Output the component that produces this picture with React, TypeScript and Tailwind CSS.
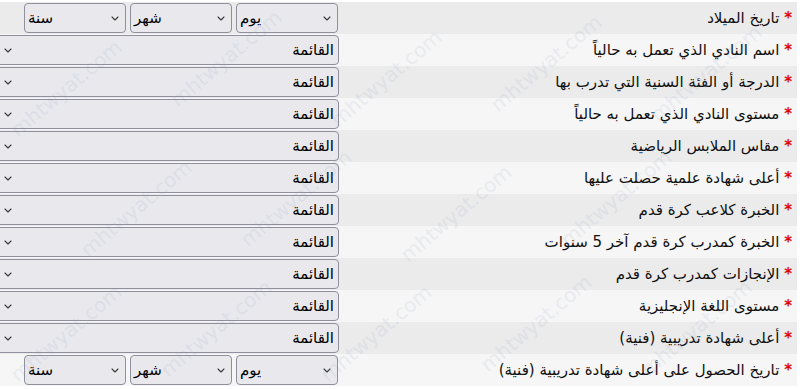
import React from "react";

const labels = [
  "تاريخ الميلاد",
  "اسم النادي الذي تعمل به حالياً",
  "الدرجة أو الفئة السنية التي تدرب بها",
  "مستوى النادي الذي تعمل به حالياً",
  "مقاس الملابس الرياضية",
  "أعلى شهادة علمية حصلت عليها",
  "الخبرة كلاعب كرة قدم",
  "الخبرة كمدرب كرة قدم آخر 5 سنوات",
  "الإنجازات كمدرب كرة قدم",
  "مستوى اللغة الإنجليزية",
  "أعلى شهادة تدريبية (فنية)",
  "تاريخ الحصول على أعلى شهادة تدريبية (فنية)",
];

function Chevron() {
  return (
    <svg width="8" height="5" viewBox="0 0 8 5" className="block">
      <path d="M1 1 L4 4 L7 1" fill="none" stroke="#3a3a3a" strokeWidth="1.1" strokeLinecap="round" strokeLinejoin="round" />
    </svg>
  );
}

function FullSelect() {
  return (
    <div className="relative w-[345px] h-[30px] ml-[-6px] rounded-[4px] border border-[#8f8f9d] bg-[#e9e9ed] flex items-center justify-between px-[4px]" dir="rtl">
      <span className="text-[15px] text-black leading-none">القائمة</span>
      <span className="pl-[5px]"><Chevron /></span>
    </div>
  );
}

function SmallSelect({ text }: { text: string }) {
  return (
    <div className="w-[102px] h-[30px] rounded-[4px] border border-[#8f8f9d] bg-[#e9e9ed] flex items-center justify-between pl-[3px] pr-[6px]" dir="ltr">
      <span className="text-[15px] text-black leading-none">{text}</span>
      <Chevron />
    </div>
  );
}

function DateSelects() {
  return (
    <div className="flex gap-[4px]" dir="rtl">
      <SmallSelect text="يوم" />
      <SmallSelect text="شهر" />
      <SmallSelect text="سنة" />
    </div>
  );
}

const marks = [
  { x: 20, y: 140 }, { x: 180, y: 110 }, { x: 340, y: 130 }, { x: 500, y: 115 }, { x: 660, y: 125 },
  { x: 90, y: 260 }, { x: 250, y: 250 }, { x: 410, y: 265 }, { x: 570, y: 250 },
  { x: 20, y: 385 }, { x: 170, y: 380 }, { x: 330, y: 385 }, { x: 490, y: 375 }, { x: 650, y: 380 },
];

export default function App() {
  return (
    <div
      className="relative w-[802px] h-[389px] overflow-hidden bg-white"
      style={{ fontFamily: '"DejaVu Sans", "Noto Sans", sans-serif' }}
    >
      <div className="pt-[2px] pr-[5px] flex flex-col" dir="rtl">
        {labels.map((l, i) => (
          <div
            key={i}
            className={`flex items-center h-[32px] ${i % 2 === 0 ? "bg-[#ebebeb]" : "bg-[#f6f6f6]"}`}
          >
            <div className="w-[457px] pr-[5px] text-[15px] text-[#111] whitespace-nowrap">
              <span className="text-[#e00000] font-bold">*</span> {l}
            </div>
            <div className="flex-1 flex pr-[2px]">
              {i === 0 || i === 11 ? <DateSelects /> : <FullSelect />}
            </div>
          </div>
        ))}
      </div>
      <div className="absolute inset-0 pointer-events-none">
        {marks.map((m, i) => (
          <span
            key={i}
            className="absolute text-[20px] leading-none text-[#8e9cc0] opacity-[0.13] whitespace-nowrap origin-bottom-left"
            style={{ left: m.x, top: m.y - 20, transform: "rotate(-40deg)" }}
          >
            mhtwyat.com
          </span>
        ))}
      </div>
    </div>
  );
}
